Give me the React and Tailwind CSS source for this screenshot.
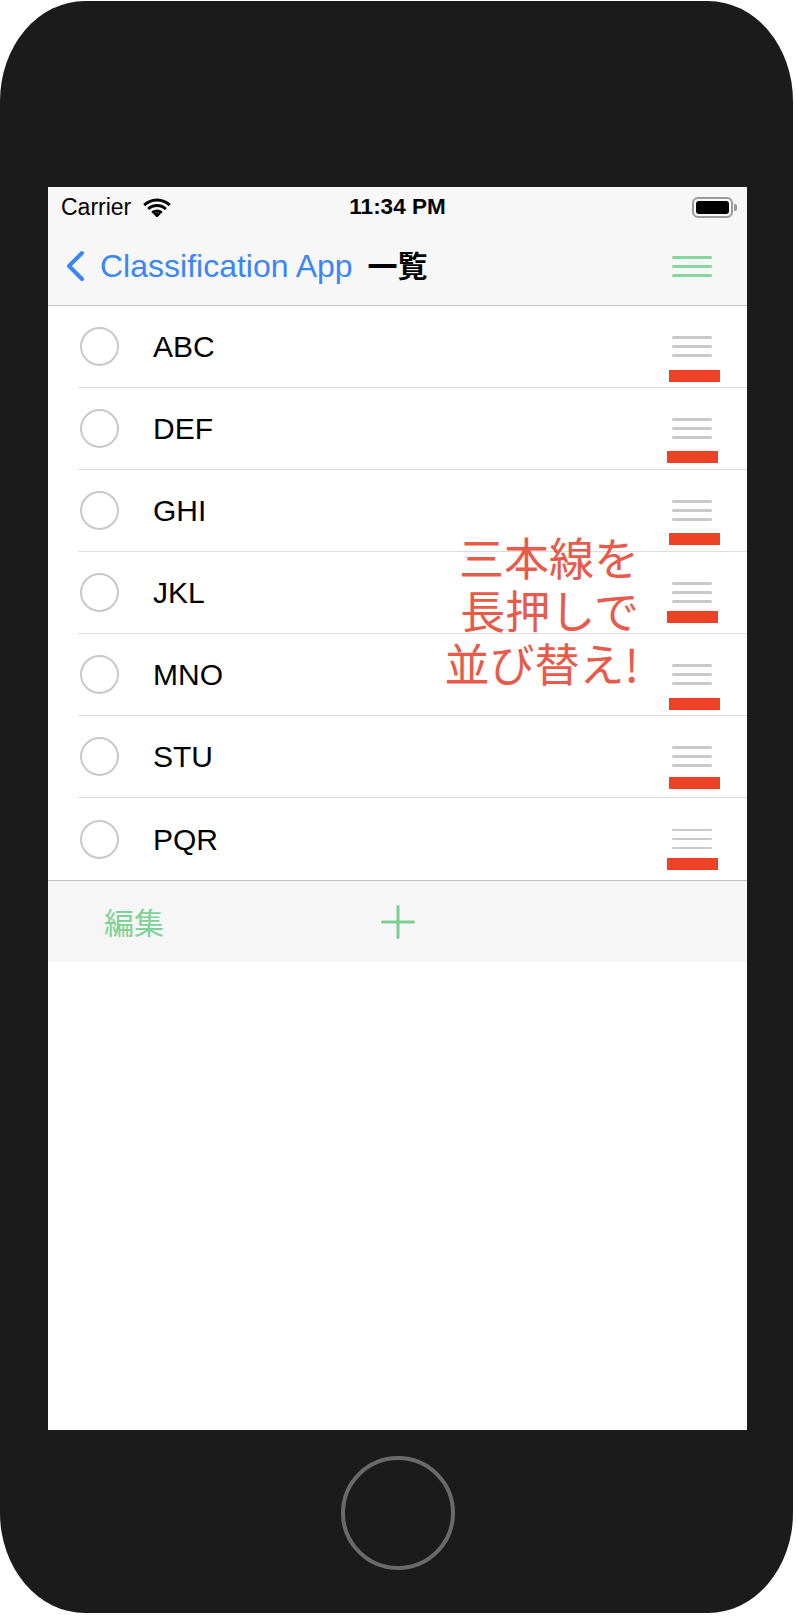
import React from "react";

const ITEMS = [
  { name: "ABC", red: 64, rx: 621 },
  { name: "DEF", red: 63, rx: 619 },
  { name: "GHI", red: 63, rx: 621 },
  { name: "JKL", red: 59, rx: 619 },
  { name: "MNO", red: 64, rx: 621 },
  { name: "STU", red: 61, rx: 621 },
  { name: "PQR", red: 60, rx: 619 },
];

const FONT = { fontFamily: '"Liberation Sans", "Noto Sans CJK JP", sans-serif' };
const JP = { fontFamily: '"Noto Sans CJK JP", sans-serif' };

function Wifi() {
  return (
    <svg width="28" height="20" viewBox="0 0 28 20">
      <path d="M14 4.5c4.6 0 8.7 1.8 11.8 4.7l2-2.1C24.2 3.7 19.3 1.5 14 1.5S3.8 3.7.2 7.1l2 2.1C5.3 6.3 9.4 4.5 14 4.5z" fill="#000" />
      <path d="M14 10c3 0 5.7 1.2 7.8 3.1l2-2.1C21.2 8.5 17.8 7 14 7s-7.2 1.5-9.8 4l2 2.1C8.3 11.2 11 10 14 10z" fill="#000" />
      <path d="M14 15.3c1.5 0 2.8.6 3.8 1.5L14 20.6l-3.8-3.8c1-.9 2.3-1.5 3.8-1.5z" fill="#000" />
      <path d="M14 12.6c2.2 0 4.2.9 5.7 2.3l-1.9 1.9c-1-.9-2.3-1.5-3.8-1.5s-2.8.6-3.8 1.5l-1.9-1.9c1.5-1.4 3.5-2.3 5.7-2.3z" fill="#000" />
    </svg>
  );
}

function Battery() {
  return (
    <div className="flex items-center">
      <div className="w-[41px] h-[21px] rounded-[6px] border-2 border-[#9a9a9a] p-[2px]">
        <div className="w-full h-full rounded-[3px] bg-black" />
      </div>
      <div className="w-[3px] h-[7px] rounded-r-[2px] bg-[#9a9a9a] ml-[1px]" />
    </div>
  );
}

function Lines({ color, w, h, gap }) {
  return (
    <div className="flex flex-col" style={{ gap }}>
      {[0, 1, 2].map((i) => (
        <div key={i} className="rounded-full" style={{ width: w, height: h, background: color }} />
      ))}
    </div>
  );
}

export default function App() {
  return (
    <div className="w-[798px] h-[1616px] bg-white" style={FONT}>
      <div className="relative w-[793px] h-[1612px] mt-[1px] bg-[#1b1b1b] rounded-[85px/100px] pt-[186px] pl-[48px]">
        <div className="w-[699px] h-[1243px] bg-white flex flex-col">
          {/* header */}
          <div className="h-[119px] bg-[#f7f7f7] border-b border-[#c4c4c4] flex flex-col">
            <div className="h-[40px] grid grid-cols-[1fr_auto_1fr] items-center">
              <div className="flex items-center pl-[13px] gap-[12px]">
                <span className="text-[23px] text-black">Carrier</span>
                <Wifi />
              </div>
              <span className="text-[22.5px] font-bold text-black">11:34 PM</span>
              <div className="flex justify-end pr-[10px]">
                <Battery />
              </div>
            </div>
            <div className="flex-1 grid grid-cols-[1fr_auto_1fr] items-center">
              <div className="flex items-center pl-[16px]">
                <svg width="22" height="32" viewBox="0 0 22 32">
                  <polyline points="18,3 5,16 18,29" fill="none" stroke="#3b86f6" strokeWidth="4" strokeLinecap="round" strokeLinejoin="round" />
                </svg>
                <span className="ml-[14px] text-[32px] text-[#3b86f6] leading-none">Classification App</span>
              </div>
              <span className="text-[30px] font-bold text-black px-[4px]">一覧</span>
              <div className="flex justify-end pr-[35px]">
                <Lines color="#86d69e" w={40} h={3} gap={6} />
              </div>
            </div>
          </div>

          {/* list */}
          <div className="relative">
            {ITEMS.map((it, i) => (
              <div key={it.name} className="relative pl-[30px] h-[82px]">
                <div
                  className={`flex items-center h-full pr-[35px] ${
                    i < ITEMS.length - 1 ? "border-b border-[#dcdcdc]" : ""
                  }`}
                >
                  <div className="ml-[2px] size-[39px] rounded-full border-2 border-[#c9c9c9]" />
                  <span className="ml-[34px] flex-1 text-[30px] text-black">{it.name}</span>
                  <Lines color="#c9c9c9" w={40} h={2.5} gap={6.5} />
                </div>
                <div
                  className="absolute h-[12px] w-[51px] bg-[#ee4227]"
                  style={{ top: it.red, left: it.rx }}
                />
              </div>
            ))}
            <div
              className="absolute right-[108px] top-[224px] text-right text-[45px] leading-[53px] text-[#e85a4a]"
              style={JP}
            >
              三本線を
              <br />
              長押しで
              <br />
              並び替え!
            </div>
          </div>

          {/* toolbar */}
          <div className="h-[82px] bg-[#f6f6f6] border-t border-[#c4c4c4] grid grid-cols-[1fr_auto_1fr] items-center">
            <span className="pl-[56px] text-[30px] text-[#7fd196]" style={JP}>
              編集
            </span>
            <svg width="34" height="34" viewBox="0 0 34 34">
              <path d="M17 1.5v31M1.5 17h31" stroke="#7acf91" strokeWidth="3" strokeLinecap="round" />
            </svg>
            <div />
          </div>
          <div className="flex-1 bg-white" />
        </div>

        <div className="w-[699px] flex justify-center mt-[26px]">
          <div className="size-[114px] rounded-full border-[4px] border-[#6a6a6a]" />
        </div>
      </div>
    </div>
  );
}
